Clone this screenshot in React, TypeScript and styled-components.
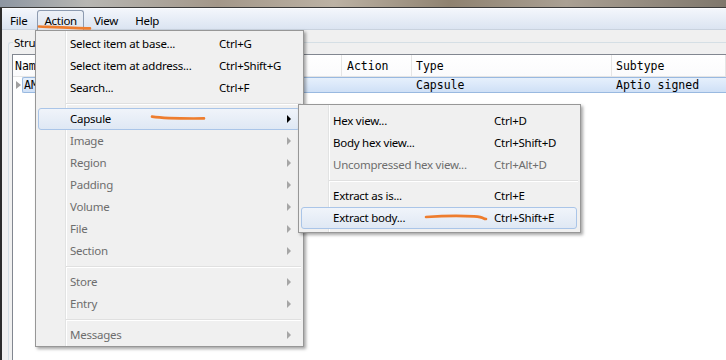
import React from "react";
import styled, { createGlobalStyle } from "styled-components";

const GlobalStyle = createGlobalStyle`
  html, body {
    margin: 0;
    padding: 0;
  }
  body {
    width: 726px;
    height: 360px;
    overflow: hidden;
    background: #f0f0f0;
    font-family: "Segoe UI", "Noto Sans", sans-serif;
    font-size: 11.5px;
    letter-spacing: -0.25px;
    color: #000;
  }
`;

const Screen = styled.div`
  position: relative;
  width: 726px;
  height: 360px;
  display: flex;
  flex-direction: column;
  overflow: hidden;
`;

const TitleStrip = styled.div`
  height: 7px;
  flex: none;
  border-bottom: 1px solid #3b3b3b;
  background: linear-gradient(
    90deg,
    #8d96a2 0%,
    #b7b6b2 12%,
    #a39789 30%,
    #bcb2a4 46%,
    #8f8270 62%,
    #aaa093 78%,
    #7f776c 100%
  );
`;

const Frame = styled.div`
  flex: 1;
  display: flex;
  flex-direction: column;
  border-left: 2px solid #2c2c2c;
  min-height: 0;
`;

const MenuBar = styled.div`
  height: 22px;
  flex: none;
  display: flex;
  align-items: flex-start;
  gap: 3px;
  padding: 1px 0 0 1px;
  box-sizing: border-box;
  background: linear-gradient(#f3f6fb, #dbe4f1);
  border-top: 1px solid #fbfcfe;
  border-bottom: 1px solid #c9d2de;
`;

const MenuBarItem = styled.div<{ $open?: boolean }>`
  height: 19px;
  line-height: 19px;
  padding: 0 6px;
  border: 1px solid ${(p) => (p.$open ? "#8d9bb0" : "transparent")};
  border-bottom: none;
  border-radius: 3px 3px 0 0;
  background: ${(p) =>
    p.$open ? "linear-gradient(#edf1f7, #dfe6f0)" : "transparent"};
`;

const Client = styled.div`
  flex: 1;
  display: flex;
  padding: 12px 0 0 6px;
  min-height: 0;
`;

const GroupBox = styled.div`
  position: relative;
  flex: 1;
  display: flex;
  padding: 11px 0 0 3px;
  border: 1px solid #d5dfe5;
  border-right: none;
  border-bottom: none;
  border-radius: 3px 0 0 0;
`;

const GroupLabel = styled.span`
  position: absolute;
  top: -8px;
  left: 4px;
  padding: 0 1px;
  background: #f0f0f0;
  line-height: 16px;
`;

const Tree = styled.div`
  flex: 1;
  background: #fff;
  border: 1px solid #828790;
  border-right: none;
  border-bottom: none;
  font-family: "DejaVu Sans Mono", "Liberation Mono", monospace;
  font-size: 11.5px;
  letter-spacing: 0;
`;

const HeaderRow = styled.div`
  display: grid;
  grid-template-columns: 329px 70px 200px 1fr;
  height: 21px;
  border-bottom: 1px solid #e5e5e5;
  background: linear-gradient(#ffffff, #fbfbfc);
`;

const HeaderCell = styled.div<{ $pad: number }>`
  line-height: 21px;
  padding: 1px 0 0 ${(p) => p.$pad}px;
  box-sizing: border-box;
  border-right: 1px solid #e5e5e5;
  white-space: nowrap;
  overflow: hidden;
`;

const Row = styled.div`
  display: flex;
  height: 16px;
`;

const Expander = styled.div`
  width: 9px;
  flex: none;
  display: flex;
  align-items: center;
  justify-content: flex-end;
  padding-right: 1px;
  box-sizing: border-box;

  &::before {
    content: "";
    width: 0;
    height: 0;
    border-top: 4px solid transparent;
    border-bottom: 4px solid transparent;
    border-left: 5px solid #a0a0a0;
  }
`;

const Selection = styled.div`
  flex: 1;
  display: grid;
  grid-template-columns: 319px 70px 200px 1fr;
  border: 1px solid #99b9e0;
  border-right: none;
  border-radius: 2px 0 0 2px;
  background: linear-gradient(#e6f0fc, #cfe0f6);
`;

const Cell = styled.div<{ $pad: number }>`
  line-height: 14px;
  padding-left: ${(p) => p.$pad}px;
  white-space: nowrap;
  overflow: hidden;
`;

const MenuPanel = styled.div<{ $left: number; $top: number; $width: number }>`
  position: absolute;
  left: ${(p) => p.$left}px;
  top: ${(p) => p.$top}px;
  width: ${(p) => p.$width}px;
  box-sizing: border-box;
  border: 1px solid #979797;
  background:
    linear-gradient(
      90deg,
      transparent 29px,
      #e2e3e3 29px,
      #e2e3e3 30px,
      #ffffff 30px,
      #ffffff 31px,
      transparent 31px
    ),
    #f0f0f0;
  box-shadow: 2px 2px 3px rgba(0, 0, 0, 0.35);
`;

const MainMenu = styled(MenuPanel)`
  padding: 2px 0 0;
`;

const SubMenu = styled(MenuPanel)`
  padding: 5px 0 3px;
`;

const Item = styled.div<{
  $active?: boolean;
  $disabled?: boolean;
  $labelWidth: number;
}>`
  height: 22px;
  box-sizing: border-box;
  margin: 0 3px 0 2px;
  padding: 0 0 1px 31px;
  display: grid;
  grid-template-columns: ${(p) => p.$labelWidth}px 1fr 20px;
  align-items: center;
  border: 1px solid ${(p) => (p.$active ? "#aac5e8" : "transparent")};
  border-radius: 3px;
  background: ${(p) =>
    p.$active ? "linear-gradient(#f0f4fa, #dfe8f4)" : "transparent"};
  color: ${(p) => (p.$disabled ? "#6d6d6d" : "#000")};
  white-space: nowrap;
`;

const Arrow = styled.span<{ $dark?: boolean }>`
  width: 0;
  height: 0;
  margin-left: 8px;
  border-top: 4px solid transparent;
  border-bottom: 4px solid transparent;
  border-left: 4px solid ${(p) => (p.$dark ? "#000" : "#a6a6a6")};
`;

const Separator = styled.div`
  height: 9px;
  margin: 0 2px 0 30px;
  display: flex;
  align-items: center;

  &::after {
    content: "";
    flex: 1;
    height: 0;
    border-top: 1px solid #e0e0e0;
    border-bottom: 1px solid #ffffff;
  }
`;

const Marks = styled.svg`
  position: absolute;
  left: 0;
  top: 0;
  pointer-events: none;
`;

type Entry =
  | { sep: true }
  | {
      sep?: false;
      label: string;
      keys?: string;
      sub?: boolean;
      disabled?: boolean;
      active?: boolean;
    };

const actionItems: Entry[] = [
  { label: "Select item at base...", keys: "Ctrl+G" },
  { label: "Select item at address...", keys: "Ctrl+Shift+G" },
  { label: "Search...", keys: "Ctrl+F" },
  { sep: true },
  { label: "Capsule", sub: true, active: true },
  { label: "Image", sub: true, disabled: true },
  { label: "Region", sub: true, disabled: true },
  { label: "Padding", sub: true, disabled: true },
  { label: "Volume", sub: true, disabled: true },
  { label: "File", sub: true, disabled: true },
  { label: "Section", sub: true, disabled: true },
  { sep: true },
  { label: "Store", sub: true, disabled: true },
  { label: "Entry", sub: true, disabled: true },
  { sep: true },
  { label: "Messages", sub: true, disabled: true },
];

const capsuleItems: Entry[] = [
  { label: "Hex view...", keys: "Ctrl+D" },
  { label: "Body hex view...", keys: "Ctrl+Shift+D" },
  { label: "Uncompressed hex view...", keys: "Ctrl+Alt+D", disabled: true },
  { sep: true },
  { label: "Extract as is...", keys: "Ctrl+E" },
  { label: "Extract body...", keys: "Ctrl+Shift+E", active: true },
];

function MenuItems({ items, labelWidth }: { items: Entry[]; labelWidth: number }) {
  return (
    <>
      {items.map((it, i) =>
        it.sep ? (
          <Separator key={i} />
        ) : (
          <Item
            key={i}
            $active={it.active}
            $disabled={it.disabled}
            $labelWidth={labelWidth}
          >
            <span>{it.label}</span>
            <span>{it.keys}</span>
            {it.sub ? <Arrow $dark={!it.disabled} /> : <span />}
          </Item>
        )
      )}
    </>
  );
}

export default function App() {
  return (
    <Screen>
      <GlobalStyle />
      <TitleStrip />
      <Frame>
        <MenuBar>
          <MenuBarItem>File</MenuBarItem>
          <MenuBarItem $open>Action</MenuBarItem>
          <MenuBarItem>View</MenuBarItem>
          <MenuBarItem>Help</MenuBarItem>
        </MenuBar>
        <Client>
          <GroupBox>
            <GroupLabel>Structure</GroupLabel>
            <Tree>
              <HeaderRow>
                <HeaderCell $pad={2}>Name</HeaderCell>
                <HeaderCell $pad={5}>Action</HeaderCell>
                <HeaderCell $pad={4}>Type</HeaderCell>
                <HeaderCell $pad={4}>Subtype</HeaderCell>
              </HeaderRow>
              <Row>
                <Expander />
                <Selection>
                  <Cell $pad={1}>AMI</Cell>
                  <Cell $pad={5}></Cell>
                  <Cell $pad={4}>Capsule</Cell>
                  <Cell $pad={4}>Aptio signed</Cell>
                </Selection>
              </Row>
            </Tree>
          </GroupBox>
        </Client>
      </Frame>

      <MainMenu $left={35} $top={30} $width={269}>
        <MenuItems items={actionItems} labelWidth={149} />
      </MainMenu>

      <SubMenu $left={298} $top={104} $width={283}>
        <MenuItems items={capsuleItems} labelWidth={161} />
      </SubMenu>

      <Marks width={726} height={360} viewBox="0 0 726 360">
        <g fill="none" stroke="#ee7d2e" strokeWidth={2.6} strokeLinecap="round">
          <path d="M39 26.5 C 55 27.2, 75 28.2, 90 28.4" />
          <path d="M152 116.6 C 165 118.4, 185 118.6, 204 118.4" />
          <path d="M426 217 C 440 216, 462 215.6, 474 216.4 S 482 218.8, 486 219" />
        </g>
      </Marks>
    </Screen>
  );
}
